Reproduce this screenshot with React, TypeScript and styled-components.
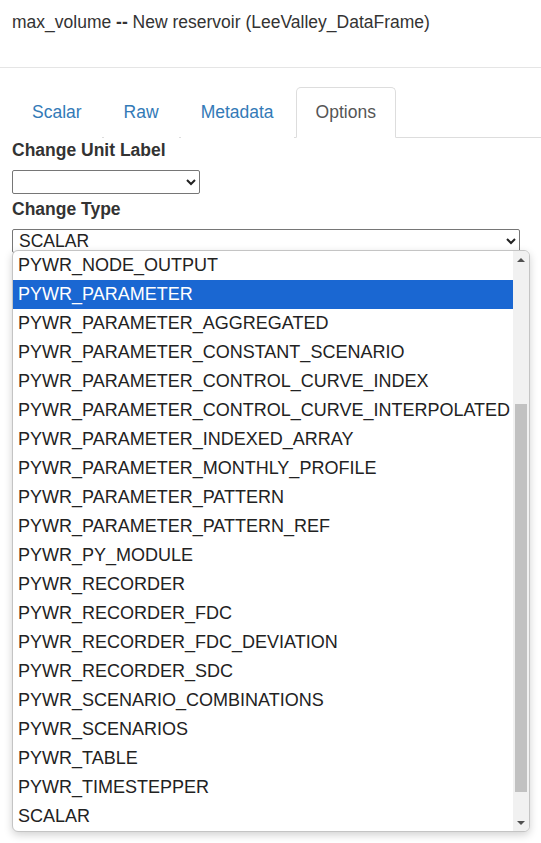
import React from "react";
import styled, { createGlobalStyle } from "styled-components";

const types = [
  "PYWR_NODE_OUTPUT",
  "PYWR_PARAMETER",
  "PYWR_PARAMETER_AGGREGATED",
  "PYWR_PARAMETER_CONSTANT_SCENARIO",
  "PYWR_PARAMETER_CONTROL_CURVE_INDEX",
  "PYWR_PARAMETER_CONTROL_CURVE_INTERPOLATED",
  "PYWR_PARAMETER_INDEXED_ARRAY",
  "PYWR_PARAMETER_MONTHLY_PROFILE",
  "PYWR_PARAMETER_PATTERN",
  "PYWR_PARAMETER_PATTERN_REF",
  "PYWR_PY_MODULE",
  "PYWR_RECORDER",
  "PYWR_RECORDER_FDC",
  "PYWR_RECORDER_FDC_DEVIATION",
  "PYWR_RECORDER_SDC",
  "PYWR_SCENARIO_COMBINATIONS",
  "PYWR_SCENARIOS",
  "PYWR_TABLE",
  "PYWR_TIMESTEPPER",
  "SCALAR"
];

const tabs = ["Scalar", "Raw", "Metadata", "Options"];

function App() {
  return (
    <>
      <GlobalStyle />
      <Header>
        max_volume <b>--</b> New reservoir (LeeValley_DataFrame)
      </Header>
      <Body>
        <Tabs>
          {tabs.map((t) => (
            <Tab key={t} $active={t === "Options"}>
              {t}
            </Tab>
          ))}
        </Tabs>
        <Form>
          <Label>Change Unit Label</Label>
          <Select $width="188px" $gap="3px" defaultValue="">
            <option value=""></option>
          </Select>
          <Label>Change Type</Label>
          <Select $width="508px" $gap="0" defaultValue="SCALAR">
            {types.map((t) => (
              <option key={t} value={t}>
                {t}
              </option>
            ))}
          </Select>
          {/* the opened list of the select above */}
          <Popup>
            <OptionList>
              {types.map((t) => (
                <OptionRow key={t} $selected={t === "PYWR_PARAMETER"}>
                  {t}
                </OptionRow>
              ))}
            </OptionList>
            <Scrollbar>
              <Arrow $up />
              <Track>
                <Thumb />
              </Track>
              <Arrow />
            </Scrollbar>
          </Popup>
        </Form>
      </Body>
    </>
  );
}

export default App;

const GlobalStyle = createGlobalStyle`
  body {
    margin: 0;
    background: #fff;
    font-family: "Liberation Sans", Arial, Helvetica, sans-serif;
    font-size: 17.5px;
    line-height: 25px;
    color: #333;
  }
`;

const Header = styled.div`
  padding: 10px 12px 32px;
  border-bottom: 1px solid #e5e5e5;
  color: #333;
`;

const Body = styled.div`
  padding: 19px 0 12px 12px;
`;

const Tabs = styled.ul`
  display: flex;
  margin: 0;
  padding: 0;
  list-style: none;
  border-bottom: 1px solid #ddd;
`;

const Tab = styled.li<{ $active?: boolean }>`
  margin-right: 2px;
  margin-bottom: -1px;
  padding: 12px 19px;
  border: 1px solid ${(p) => (p.$active ? "#ddd" : "transparent")};
  border-bottom-color: ${(p) => (p.$active ? "#fff" : "transparent")};
  border-radius: 5px 5px 0 0;
  background: #fff;
  color: ${(p) => (p.$active ? "#555" : "#337ab7")};
`;

const Form = styled.div`
  display: flex;
  flex-direction: column;
  align-items: flex-start;
`;

const Label = styled.label`
  font-weight: 700;
  margin-bottom: 7px;
`;

const Select = styled.select<{ $width: string; $gap: string }>`
  width: ${(p) => p.$width};
  height: 24px;
  margin: 0 0 ${(p) => p.$gap};
  padding: 0 2px;
  font-family: "Liberation Sans", Arial, sans-serif;
  font-size: 17.5px;
  color: #222;
  background: #fff;
  border: 1px solid #767676;
  border-radius: 2px;
`;

const Popup = styled.div`
  position: relative;
  z-index: 1;
  margin-top: -3px;
  width: 516px;
  height: 580px;
  display: flex;
  border: 1px solid #c4c4c4;
  border-radius: 6px;
  background: #fff;
  box-shadow: 0 3px 8px rgba(0, 0, 0, 0.18);
  overflow: hidden;
`;

const OptionList = styled.div`
  flex: 1;
  display: flex;
  flex-direction: column;
`;

const OptionRow = styled.div<{ $selected?: boolean }>`
  height: 29px;
  flex-shrink: 0;
  line-height: 29px;
  padding-left: 5px;
  font-size: 18px;
  white-space: nowrap;
  color: ${(p) => (p.$selected ? "#fff" : "#222")};
  background: ${(p) => (p.$selected ? "#1a67d2" : "transparent")};
`;

const Scrollbar = styled.div`
  width: 16px;
  display: flex;
  flex-direction: column;
  background: #f1f1f1;
`;

const Arrow = styled.div<{ $up?: boolean }>`
  height: 17px;
  display: flex;
  align-items: center;
  justify-content: center;

  &::before {
    content: "";
    border-left: 4px solid transparent;
    border-right: 4px solid transparent;
    ${(p) =>
      p.$up ? "border-bottom: 4px solid #505050;" : "border-top: 4px solid #505050;"}
  }
`;

const Track = styled.div`
  flex: 1;
  display: flex;
  flex-direction: column;
  padding: 136px 2px 22px;
`;

const Thumb = styled.div`
  flex: 1;
  background: #c1c1c1;
`;
